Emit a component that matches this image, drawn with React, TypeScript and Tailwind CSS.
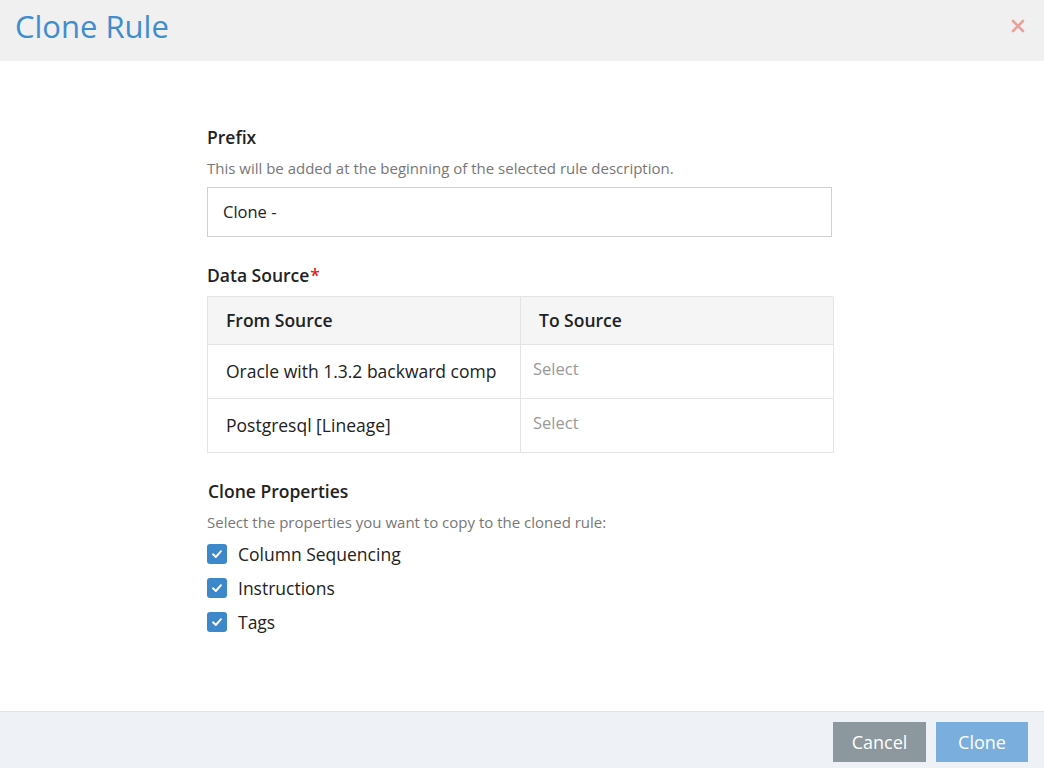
import React from "react";

const font = { fontFamily: '"Open Sans", "Noto Sans", sans-serif' };

const rows = [
  { from: "Oracle with 1.3.2 backward comp" },
  { from: "Postgresql [Lineage]" },
];

const props = ["Column Sequencing", "Instructions", "Tags"];

function Check() {
  return (
    <span className="flex h-[20px] w-[20px] shrink-0 items-center justify-center rounded-[3px] bg-[#3d87cb]">
      <svg width="12" height="12" viewBox="0 0 12 12" fill="none">
        <path d="M2 6.3 L4.8 9 L10 3.2" stroke="white" strokeWidth="1.9" strokeLinecap="round" strokeLinejoin="round" />
      </svg>
    </span>
  );
}

export default function App() {
  return (
    <div className="flex h-[768px] w-[1044px] flex-col bg-white" style={font}>
      {/* Header */}
      <div className="flex h-[61px] shrink-0 items-center justify-between bg-[#f0f0f0] pl-[15px] pr-[19px]">
        <h1 className="pb-[8px] text-[31px] leading-none text-[#3f8ccf]">Clone Rule</h1>
        <svg width="14" height="14" viewBox="0 0 14 14" className="mb-[10px]">
          <path d="M2 2 L12 12 M12 2 L2 12" stroke="#e9a19b" strokeWidth="2.6" strokeLinecap="round" />
        </svg>
      </div>

      {/* Body */}
      <div className="flex flex-1 pl-[207px]">
        <div className="w-[626px] pt-[64px]">
          <div className="text-[17.5px] font-semibold leading-[24px] text-[#222]">Prefix</div>
          <div className="mt-[8px] text-[15px] leading-[22px] text-[#777]">
            This will be added at the beginning of the selected rule description.
          </div>
          <div className="mt-[8px] flex h-[50px] w-[625px] items-center border border-[#d0d0d0] px-[15px] text-[16.5px] text-[#222]">
            Clone -
          </div>

          <div className="mt-[26px] flex text-[17.5px] font-semibold leading-[24px] text-[#222]">
            Data Source<span className="ml-[1px] text-[#e02020]">*</span>
          </div>
          <div className="mt-[9px] grid w-[626px] grid-cols-[313px_313px] border-l border-t border-[#e4e4e4]">
            <div className="flex h-[48px] items-center border-b border-r border-[#e4e4e4] bg-[#f5f5f5] pl-[18px] text-[17.5px] font-semibold text-[#222]">
              From Source
            </div>
            <div className="flex h-[48px] items-center border-b border-r border-[#e4e4e4] bg-[#f5f5f5] pl-[18px] text-[17.5px] font-semibold text-[#222]">
              To Source
            </div>
            {rows.map((r) => (
              <React.Fragment key={r.from}>
                <div className="flex h-[54px] items-center border-b border-r border-[#e4e4e4] pl-[18px] text-[17.5px] text-[#222]">
                  {r.from}
                </div>
                <div className="flex h-[54px] items-center border-b border-r border-[#e4e4e4] pb-[4px] pl-[12px] text-[16.5px] text-[#999]">
                  Select
                </div>
              </React.Fragment>
            ))}
          </div>

          <div className="mt-[26px] pl-[1px] text-[17.5px] font-semibold leading-[24px] text-[#222]">Clone Properties</div>
          <div className="mt-[8px] text-[15px] leading-[22px] text-[#777]">
            Select the properties you want to copy to the cloned rule:
          </div>
          <div className="mt-[4px] flex flex-col">
            {props.map((p) => (
              <div key={p} className="flex h-[34px] items-center gap-[11px] text-[17.5px] text-[#222]">
                <Check />
                <span>{p}</span>
              </div>
            ))}
          </div>
        </div>
      </div>

      {/* Footer */}
      <div className="flex h-[57px] shrink-0 items-start justify-end gap-[10px] border-t border-[#e0e4ea] bg-[#eef2f7] pr-[16px] pt-[10px]">
        <button className="h-[40px] w-[93px] bg-[#8c979e] text-[18px] text-white">Cancel</button>
        <button className="h-[40px] w-[92px] bg-[#7aaedc] text-[18px] text-white">Clone</button>
      </div>
    </div>
  );
}
